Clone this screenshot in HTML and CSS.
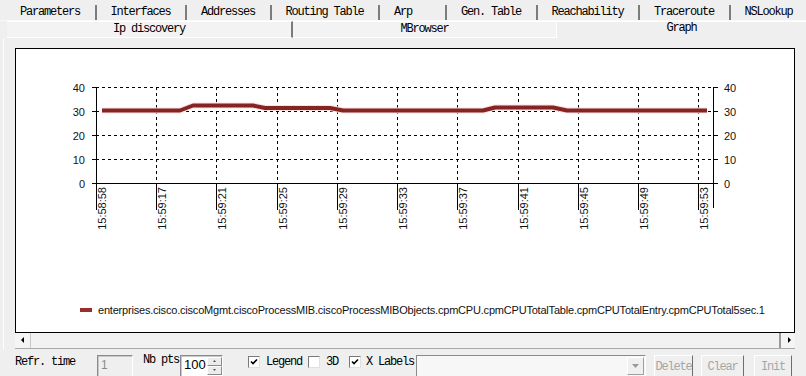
FILE: index.html
```html
<!DOCTYPE html>
<html>
<head>
<meta charset="utf-8">
<link rel="stylesheet" href="styles.css">
</head>
<body>
<div class="tabs row1">
  <div class="tab">Parameters</div>
  <div class="tab">Interfaces</div>
  <div class="tab">Addresses</div>
  <div class="tab">Routing Table</div>
  <div class="tab arp">Arp</div>
  <div class="tab">Gen. Table</div>
  <div class="tab">Reachability</div>
  <div class="tab">Traceroute</div>
  <div class="tab last">NSLookup</div>
</div>
<div class="tabs row2">
  <div class="tab t-ip">Ip discovery</div>
  <div class="tab t-mb">MBrowser</div>
  <div class="tab t-graph">Graph</div>
</div>
<div class="panel">
  <div class="chart">
    <svg width="778" height="240" viewBox="16 49 778 240" xmlns="http://www.w3.org/2000/svg">
      <path class="dash" d="M96 87.5H713M96 111.5H713M96 135.5H713M96 159.5H713M156.5 87V183M216.5 87V183M277.5 87V183M337.5 87V183M397.5 87V183M457.5 87V183M518.5 87V183M578.5 87V183M638.5 87V183M698.5 87V183"/>
      <path class="axis" d="M96.5 87V210M96 183.5H714M713.5 87V208M92 87.5H96M92 111.5H96M92 135.5H96M92 159.5H96M92 183.5H96M714 87.5H718M714 111.5H718M714 135.5H718M714 159.5H718M714 183.5H718M156.5 183V210M216.5 183V210M277.5 183V210M337.5 183V210M397.5 183V210M457.5 183V210M518.5 183V210M578.5 183V210M638.5 183V210M698.5 183V210"/>
      <polyline class="glow" points="102,110.5 180,110.5 193,105.5 253,105.5 265,108 330,108 343,110.5 483,110.5 495,107.5 553,107.5 567,110.5 707,110.5"/>
      <polyline class="series" points="102,110.5 180,110.5 193,105.5 253,105.5 265,108 330,108 343,110.5 483,110.5 495,107.5 553,107.5 567,110.5 707,110.5"/>
      <g class="ylab left">
        <text x="85" y="91.5">40</text>
        <text x="85" y="115.5">30</text>
        <text x="85" y="139.5">20</text>
        <text x="85" y="163.5">10</text>
        <text x="85" y="187.5">0</text>
      </g>
      <g class="ylab">
        <text x="724" y="91.5">40</text>
        <text x="724" y="115.5">30</text>
        <text x="724" y="139.5">20</text>
        <text x="724" y="163.5">10</text>
        <text x="724" y="187.5">0</text>
      </g>
      <g class="xlab">
        <text x="105.5" y="187" transform="rotate(-90 105.5 187)">15:58:58</text>
        <text x="165.5" y="187" transform="rotate(-90 165.5 187)">15:59:17</text>
        <text x="225.5" y="187" transform="rotate(-90 225.5 187)">15:59:21</text>
        <text x="286.5" y="187" transform="rotate(-90 286.5 187)">15:59:25</text>
        <text x="346.5" y="187" transform="rotate(-90 346.5 187)">15:59:29</text>
        <text x="406.5" y="187" transform="rotate(-90 406.5 187)">15:59:33</text>
        <text x="466.5" y="187" transform="rotate(-90 466.5 187)">15:59:37</text>
        <text x="527.5" y="187" transform="rotate(-90 527.5 187)">15:59:41</text>
        <text x="587.5" y="187" transform="rotate(-90 587.5 187)">15:59:45</text>
        <text x="647.5" y="187" transform="rotate(-90 647.5 187)">15:59:49</text>
        <text x="707.5" y="187" transform="rotate(-90 707.5 187)">15:59:53</text>
      </g>
    </svg>
    <div class="legend-row">
      <span class="swatch"></span>
      <span class="legend">enterprises.cisco.ciscoMgmt.ciscoProcessMIB.ciscoProcessMIBObjects.cpmCPU.cpmCPUTotalTable.cpmCPUTotalEntry.cpmCPUTotal5sec.1</span>
    </div>
  </div>
  <div class="hscroll">
    <div class="sbtn"><svg width="14" height="14" viewBox="0 0 14 14"><polygon points="5,7 8,4 8,10" fill="#000"/></svg></div>
    <div class="track"></div>
    <div class="sbtn right"><svg width="14" height="14" viewBox="0 0 14 14"><polygon points="9,7 6,4 6,10" fill="#000"/></svg></div>
  </div>
</div>
<div class="controls">
  <div class="lbl refr">Refr. time</div>
  <div class="field f-refr">1</div>
  <div class="lbl nb">Nb pts</div>
  <div class="field f-nb">100
    <div class="spin">
      <div class="spb"><svg width="13" height="8" viewBox="0 0 13 8"><polygon points="6.5,3 5,5 8,5" fill="#555"/></svg></div>
      <div class="spb"><svg width="13" height="8" viewBox="0 0 13 8"><polygon points="6.5,5 5,3 8,3" fill="#555"/></svg></div>
    </div>
  </div>
  <div class="cb c1"><svg width="10" height="10" viewBox="0 0 10 10"><path d="M2 4.5L4 6.5L8 2.5" fill="none" stroke="#000" stroke-width="1.6"/></svg></div>
  <div class="lbl leg">Legend</div>
  <div class="cb c2"></div>
  <div class="lbl d3">3D</div>
  <div class="cb c3"><svg width="10" height="10" viewBox="0 0 10 10"><path d="M2 4.5L4 6.5L8 2.5" fill="none" stroke="#000" stroke-width="1.6"/></svg></div>
  <div class="lbl xl">X Labels</div>
  <div class="combo">
    <div class="cbtn"><svg width="15" height="16" viewBox="0 0 15 16"><polygon points="4,6 11,6 7.5,10" fill="#9a9a9a"/></svg></div>
  </div>
  <div class="btn b-del">Delete</div>
  <div class="btn b-clr">Clear</div>
  <div class="btn b-init">Init</div>
</div>
</body>
</html>
```
FILE: styles.css
```css
* { box-sizing: border-box; }
html, body { margin: 0; padding: 0; }
body {
  width: 806px;
  height: 376px;
  overflow: hidden;
  background: #efefef;
  color: #000;
  font: 12px/1 "Liberation Mono", "DejaVu Sans Mono", monospace;
  letter-spacing: -1.2px;
}
.tabs { display: flex; }
.row1 {
  height: 21px;
  padding-left: 6px;
  border-bottom: 1px solid #fafafa;
}
.row1 .tab {
  margin-top: 5px;
  height: 15px;
  line-height: 15px;
  padding: 0 14.5px 0 14px;
  border-right: 2px solid #7c7c7c;
  white-space: nowrap;
}
.row1 .tab.arp { min-width: 67px; }
.row1 .tab.last { border-right: none; }
.row2 {
  height: 17px;
  padding-left: 7px;
}
.row2 .tab {
  text-align: center;
  line-height: 15px;
  border-top: 1px solid #fff;
  border-bottom: 1px solid #fff;
  background: #f3f3f3;
  white-space: nowrap;
}
.t-ip { width: 286px; border-right: 2px solid #7c7c7c; }
.t-mb { width: 264px; border-right: 1px solid #fff; }
.row2 .t-graph {
  flex: 1;
  background: #efefef;
  border-bottom: none;
  line-height: 12px;
}
.panel {
  padding: 10px 0 0 11px;
  border-left: 1px solid #fdfdfd;
  margin-left: 3px;
}
.chart {
  width: 780px;
  height: 285px;
  border: 1px solid #000;
  background: #fff;
  letter-spacing: 0;
}
.chart svg { display: block; }
.dash {
  fill: none;
  stroke: #000;
  stroke-width: 1;
  stroke-dasharray: 3 3;
  shape-rendering: crispEdges;
}
.axis {
  fill: none;
  stroke: #000;
  stroke-width: 1;
  shape-rendering: crispEdges;
}
.glow {
  fill: none;
  stroke: #fbe0e0;
  stroke-width: 6;
  stroke-linejoin: round;
}
.series {
  fill: none;
  stroke: #862424;
  stroke-width: 4;
  stroke-linejoin: round;
}
.ylab text, .xlab text {
  font-family: "Liberation Sans", Arial, sans-serif;
  font-size: 11px;
  fill: #111;
}
.ylab.left text { text-anchor: end; }
.xlab text { text-anchor: end; }
.legend-row {
  display: flex;
  align-items: center;
  height: 20px;
  margin-top: 11px;
  padding-left: 64px;
  white-space: nowrap;
}
.swatch {
  width: 12px;
  height: 4px;
  background: #9a2e2e;
  margin-right: 6px;
}
.legend {
  font-family: "Liberation Sans", Arial, sans-serif;
  font-size: 11px;
  letter-spacing: -0.2px;
  color: #111;
}
.hscroll {
  display: flex;
  width: 780px;
  height: 16px;
  border-bottom: 1px solid #a8a8a8;
  background: #f2f2f2;
}
.sbtn {
  width: 16px;
  height: 15px;
  border-right: 1px solid #c8c8c8;
  background: #f4f4f4;
}
.sbtn.right {
  border-right: none;
  border-left: 2px solid #9a9a9a;
}
.sbtn svg { display: block; margin: 0 0 0 1px; }
.track { flex: 1; }
.controls {
  display: flex;
  align-items: flex-start;
  padding: 6px 0 0 15px;
  height: 27px;
}
.lbl { line-height: 14px; white-space: nowrap; }
.refr { width: 60px; }
.f-refr { margin-left: 22px; width: 36px; }
.nb { margin-left: 10px; width: 36px; margin-top: -2px; }
.f-nb { margin-left: 1px; width: 43px; }
.c1 { margin-left: 25px; }
.leg { margin-left: 6px; width: 36px; }
.c2 { margin-left: 6px; }
.d3 { margin-left: 6px; width: 12px; }
.c3 { margin-left: 11px; }
.xl { margin-left: 5px; width: 48px; }
.field {
  position: relative;
  height: 22px;
  border: 1px solid;
  border-color: #8a8a8a #fff #fff #8a8a8a;
  box-shadow: inset 1px 1px 0 #c8c8c8;
  font-family: "Liberation Sans", Arial, sans-serif;
  letter-spacing: 0;
  font-size: 12px;
  line-height: 18px;
  padding-left: 3px;
  color: #8a8a8a;
}
.f-refr { background: #efefef; }
.f-nb { background: #fff; color: #000; font-size: 13px; }
.spin {
  position: absolute;
  right: 0;
  top: 1px;
  width: 15px;
  height: 18px;
  display: flex;
  flex-direction: column;
}
.spb {
  height: 9px;
  background: #ececec;
  border: 1px solid;
  border-color: #fff #8a8a8a #8a8a8a #fff;
}
.spb svg { display: block; margin-top: -1px; }
.cb {
  width: 12px;
  height: 12px;
  margin-top: 1px;
  background: #fff;
  border: 1px solid;
  border-color: #7a7a7a #e0e0e0 #e0e0e0 #7a7a7a;
}
.cb svg { display: block; }
.combo {
  margin-left: 2px;
  width: 230px;
  height: 22px;
  background: #f7f7f7;
  border: 1px solid;
  border-color: #8a8a8a #fff #fff #8a8a8a;
  display: flex;
  justify-content: flex-end;
  padding: 1px;
}
.cbtn {
  width: 17px;
  height: 18px;
  background: #f0f0f0;
  border: 1px solid;
  border-color: #fff #a0a0a0 #a0a0a0 #fff;
}
.cbtn svg { display: block; }
.btn {
  height: 22px;
  border: 1px solid;
  border-color: #fff #6e6e6e #6e6e6e #fff;
  color: #a6a6a6;
  text-align: center;
  line-height: 20px;
  padding-top: 1px;
  white-space: nowrap;
}
.b-del { margin-left: 8px; width: 39px; }
.b-clr { margin-left: 8px; width: 43px; }
.b-init { margin-left: 10px; width: 38px; }
```
